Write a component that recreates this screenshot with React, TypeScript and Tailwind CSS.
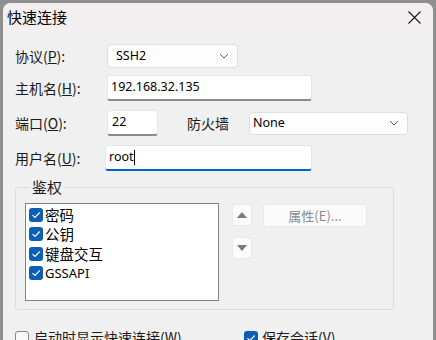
import React from 'react';

const cjk = { fontFamily: '"Noto Sans CJK SC", "Noto Sans", sans-serif' };
const latin = { fontFamily: '"Noto Sans", "Noto Sans CJK SC", sans-serif' };

function Chevron() {
  return (
    <svg width="10" height="6" viewBox="0 0 10 6" className="text-[#5c5c5c]">
      <path d="M1 1 L5 5 L9 1" fill="none" stroke="currentColor" strokeWidth="1" />
    </svg>
  );
}

function Check({ checked }: { checked: boolean }) {
  if (!checked) {
    return <span className="w-[14px] h-[14px] rounded-[3px] border border-[#878787] bg-[#f8f8f8] shrink-0" />;
  }
  return (
    <span className="w-[14px] h-[14px] rounded-[3px] bg-[#0d5fb3] flex items-center justify-center shrink-0">
      <svg width="10" height="8" viewBox="0 0 10 8">
        <path d="M1.5 4.2 L4 6.5 L8.7 1.5" fill="none" stroke="#fff" strokeWidth="1.1" />
      </svg>
    </span>
  );
}

function Label({ children }: { children: React.ReactNode }) {
  return (
    <span className="w-[92px] text-[14px] text-[#1a1a1a] shrink-0" style={cjk}>
      {children}
    </span>
  );
}

export default function App() {
  const methods = ['密码', '公钥', '键盘交互', 'GSSAPI'];

  return (
    <div className="w-[436px] h-[340px] bg-[#8f8f8f] pt-[3px] px-[3px] overflow-hidden">
      <div className="h-[400px] bg-[#f0f0f0] rounded-t-[8px] overflow-hidden">
        {/* title bar */}
        <div className="h-[28px] bg-[#f3eff0] flex items-center justify-between pl-[4px] pr-[12px]">
          <span className="text-[15px] text-black" style={cjk}>快速连接</span>
          <svg width="13" height="13" viewBox="0 0 13 13">
            <path d="M0.5 0.5 L12.5 12.5 M12.5 0.5 L0.5 12.5" stroke="#1a1a1a" strokeWidth="1.1" />
          </svg>
        </div>

        <div className="px-[12px]">
          {/* protocol */}
          <div className="mt-[13px] h-[24px] flex items-center">
            <Label>协议(<span className="underline">P</span>):</Label>
            <div className="w-[131px] h-[24px] bg-[#fdfdfd] border border-[#dedede] rounded-[4px] flex items-center justify-between pl-[8px] pr-[8px]">
              <span className="text-[12.5px] text-black" style={latin}>SSH2</span>
              <Chevron />
            </div>
          </div>

          {/* host */}
          <div className="mt-[7px] h-[26px] flex items-center">
            <Label>主机名(<span className="underline">H</span>):</Label>
            <div className="w-[205px] h-[26px] bg-white border border-[#e6e6e6] border-b-2 border-b-[#8a8a8a] rounded-[3px] flex items-center pl-[3px]">
              <span className="text-[12.5px] text-black" style={latin}>192.168.32.135</span>
            </div>
          </div>

          {/* port + firewall */}
          <div className="mt-[9px] h-[26px] flex items-center">
            <Label>端口(<span className="underline">O</span>):</Label>
            <div className="w-[51px] h-[26px] bg-white border border-[#e6e6e6] border-b-2 border-b-[#8a8a8a] rounded-[3px] flex items-center pl-[4px]">
              <span className="text-[12.5px] text-black" style={latin}>22</span>
            </div>
            <span className="ml-[29px] w-[62px] text-[14px] text-[#1a1a1a]" style={cjk}>防火墙</span>
            <div className="w-[159px] h-[23px] bg-[#fdfdfd] border border-[#dedede] rounded-[4px] flex items-center justify-between pl-[3px] pr-[8px]">
              <span className="text-[12.5px] text-black" style={latin}>None</span>
              <Chevron />
            </div>
          </div>

          {/* user */}
          <div className="mt-[9px] h-[26px] flex items-center">
            <Label>用户名(<span className="underline">U</span>):</Label>
            <div className="-ml-[2px] w-[207px] h-[26px] bg-white border border-[#e6e6e6] border-b-2 border-b-[#0067c0] rounded-[3px] flex items-center pl-[3px]">
              <span className="text-[12.5px] text-black" style={latin}>root</span>
              <span className="w-[1px] h-[15px] bg-black" />
            </div>
          </div>

          {/* auth group */}
          <fieldset className="mt-[7px] w-[379px] h-[132px] border border-[#dcdcdc] rounded-[3px] pl-[9px] pt-[7px]">
            <legend className="ml-[5px] px-[2px] text-[15px] text-[#1a1a1a] leading-[18px]" style={cjk}>鉴权</legend>
            <div className="flex items-start">
              <div className="w-[194px] h-[98px] bg-white border border-[#848484] pt-[1px] pl-[3px]">
                {methods.map((m) => (
                  <div key={m} className="h-[19.5px] flex items-center gap-[2px]">
                    <Check checked />
                    <span
                      className={m === 'GSSAPI' ? 'text-[13px] text-black' : 'text-[14.5px] text-black'}
                      style={m === 'GSSAPI' ? latin : cjk}
                    >
                      {m}
                    </span>
                  </div>
                ))}
              </div>
              <div className="ml-[13px] mt-[1px] flex flex-col gap-[11px]">
                <div className="w-[20px] h-[22px] bg-[#fbfbfb] border border-[#e8e8e8] rounded-[3px] flex items-center justify-center">
                  <svg width="10" height="6" viewBox="0 0 10 6"><path d="M0 6 L5 0 L10 6 Z" fill="#7a7a7a" /></svg>
                </div>
                <div className="w-[20px] h-[22px] bg-[#fbfbfb] border border-[#e8e8e8] rounded-[3px] flex items-center justify-center">
                  <svg width="10" height="6" viewBox="0 0 10 6"><path d="M0 0 L5 6 L10 0 Z" fill="#7a7a7a" /></svg>
                </div>
              </div>
              <div className="ml-[11px] mt-[1px] w-[104px] h-[23px] bg-[#fbfbfb] border border-[#e8e8e8] rounded-[3px] flex items-center justify-center">
                <span className="text-[13px] text-[#8a8a8a]" style={cjk}>属性(E)...</span>
              </div>
            </div>
          </fieldset>

          {/* bottom options */}
          <div className="mt-[17px] flex items-center">
            <div className="w-[229px] flex items-center gap-[5px]">
              <Check checked={false} />
              <span className="text-[14px] text-[#1a1a1a]" style={cjk}>启动时显示快速连接(W)</span>
            </div>
            <div className="flex items-center gap-[4px]">
              <Check checked />
              <span className="text-[14px] text-[#1a1a1a]" style={cjk}>保存会话(V)</span>
            </div>
          </div>
        </div>
      </div>
    </div>
  );
}
